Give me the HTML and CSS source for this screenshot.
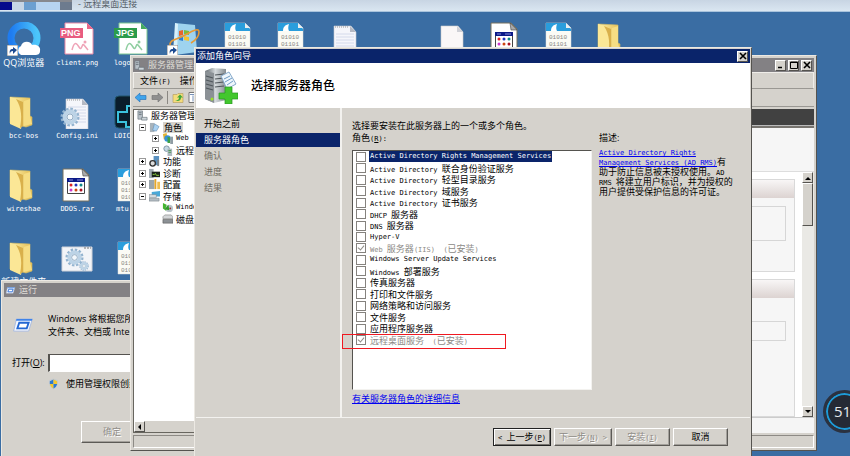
FILE: index.html
```html
<!DOCTYPE html>
<html lang="zh-CN">
<head>
  <meta charset="UTF-8" />
  <meta name="viewport" content="width=device-width, initial-scale=1.0" />
  <title>远程桌面连接</title>
  <link rel="stylesheet" href="styles.css">
</head>
<body>
  <svg class="defs" aria-hidden="true">
    <defs>
      <linearGradient id="gFolder" x1="0" x2="1"><stop offset="0" stop-color="#fdf0a8"/><stop offset="1" stop-color="#e3bd55"/></linearGradient>
      <linearGradient id="gBlue" x1="0" x2="1"><stop offset="0" stop-color="#1e7bf0"/><stop offset="1" stop-color="#4cc6fb"/></linearGradient>
      <linearGradient id="gServer" x1="0" x2="1"><stop offset="0" stop-color="#60676c"/><stop offset=".5" stop-color="#d5dadd"/><stop offset="1" stop-color="#858c91"/></linearGradient>
      <symbol id="shortcut" viewBox="0 0 11 11"><path d="M0 0h11v11H0z" fill="#fff" stroke="#888"/><path d="M3 9c-1-3 0-5 3-5V2l4 3-4 4V6C4 6 3 7 3 9z" fill="#1c4b91"/></symbol>
      <symbol id="folder" viewBox="0 0 34 34">
        <path d="M3 2l20 1v18l2 1v8l-6 2L3 28z" fill="url(#gFolder)" stroke="#d9bd62" stroke-width=".6"/>
        <path d="M3 2l11 4c2 6 2 20 0 28L3 29z" fill="#fbe796"/>
        <path d="M9 4l7 3v24l-3 2c2-10 2-20-4-29z" fill="#d9b04b"/>
        <path d="M17 6l6-2v17l2 8-8 2z" fill="#f6dd83"/>
      </symbol>
      <symbol id="binfile" viewBox="0 0 34 34">
        <path d="M4 1h20l5 5v27H4z" fill="#fbfbf5" stroke="#ddd" stroke-width=".5"/>
        <path d="M4 1h20l5 6v2H4z" fill="#2a9ddc"/>
        <path d="M9 9c0-4 2-6 6-7-1 3-1 5 0 7z" fill="#fff"/>
        <path d="M24 1v5h5z" fill="#e9eef0"/>
        <g fill="#878781" font-family="Liberation Mono" font-size="6"><text x="7" y="17">01010</text><text x="7" y="24">01101</text><text x="7" y="31">01010</text></g>
      </symbol>
      <symbol id="notes" viewBox="0 0 34 34">
        <path d="M6 4h17l5 6v24H6z" fill="#f5f6fb" stroke="#c8cbd2" stroke-width=".6"/>
        <path d="M7 5h14" stroke="#999" stroke-dasharray="1 1"/><path d="M22 4v6h6z" fill="#b5b9c3"/>
        <path d="M8 12h18M8 15h18M8 18h18M8 21h18M8 24h18M8 27h18" stroke="#cbd4e8" stroke-width=".8"/>
      </symbol>
      <symbol id="rar" viewBox="0 0 34 34">
        <path d="M3 1h20l6 6v26H3z" fill="#fff" stroke="#77705c"/><path d="M22 1l1 7h6z" fill="#aaa" stroke="#444" stroke-width=".6"/>
        <path d="M7.500 11.500h17v14h-17z" fill="#fff" stroke="#444"/><path d="M7 10h18v4H7z" fill="#0b1987"/>
        <path d="M9 12h4m4 0h6" stroke="#8b92da"/>
        <g><circle cx="11" cy="17" r="1.500" fill="#d22"/><circle cx="16" cy="17" r="1.500" fill="#23b"/><circle cx="21" cy="17" r="1.500" fill="#188"/><circle cx="11" cy="22" r="1.500" fill="#c3c"/><circle cx="16" cy="22" r="1.500" fill="#c41"/><circle cx="21" cy="22" r="1.500" fill="#a12"/></g>
      </symbol>
      <symbol id="gear" viewBox="0 0 20 20">
        <circle cx="10" cy="10" r="8" fill="none" stroke="#93b3cf" stroke-width="3" stroke-dasharray="2.500 1.690"/>
        <circle cx="10" cy="10" r="5.500" fill="none" stroke="#bcd3e6" stroke-width="4"/><circle cx="10" cy="10" r="3" fill="#f2f7fb" stroke="#7f9db8" stroke-width=".8"/>
      </symbol>
      <symbol id="server" viewBox="0 0 12 12">
        <path d="M1 1h5v9H1z" fill="#b8c1c8" stroke="#6b747b" stroke-width=".7"/><path d="M2 3h3M2 5h3" stroke="#56606a" stroke-width=".8"/>
        <path d="M5 8h6v3H5z" fill="#cdd5da" stroke="#68727a" stroke-width=".7"/>
      </symbol>
      <symbol id="runicon" viewBox="0 0 22 16"><path d="M4 1h17l-4 13H1z" fill="#f4f8ff" stroke="#a6b9dd"/><path d="M4 1h17l-.6 2H3.500z" fill="#3f83e8"/><path d="M7 5h10l-2 6H5z" fill="#fff" stroke="#2367d3" stroke-width="2"/></symbol>
      <symbol id="cross" viewBox="0 0 8 8"><path d="M1 1l6 6M7 1L1 7" stroke="#000" stroke-width="1.600"/></symbol>
    </defs>
  </svg>

  <header class="session-bar">
    <span class="mosaic"><i></i><i></i><i></i><i></i><i></i><i></i></span>
    <span class="session-title">- 远程桌面连接</span>
  </header>

  <main class="desktop">
    <div class="icon-row">
      <a class="shortcut" href="#"><svg viewBox="0 0 34 34"><circle cx="17" cy="16" r="13" fill="none" stroke="url(#gBlue)" stroke-width="7"/><path d="M14 33a5 5 0 0 1 0-9c1-5 9-6 11-1 5-1 9 2 8 6 0 3-2 4-5 4z" fill="#fff"/><use href="#shortcut" y="23" width="11" height="11"/></svg><span>QQ浏览器</span></a>
      <a class="shortcut" href="#"><svg viewBox="0 0 34 34"><path d="M5 1h22l6 6v25H5z" fill="#fff" stroke="#ee8ba6"/><path d="M27 1v6h6z" fill="#e8678a"/><path d="M0 6h23v10H0z" fill="#e85c80"/><text x="1" y="14" font-family="Liberation Sans" font-weight="bold" font-size="9" fill="#fff">PNG</text><path d="M12 28c2-8 4-8 7-3s3-5 5-2l4 5" fill="none" stroke="#efa3b7" stroke-width="1.500"/><circle cx="25" cy="20" r="1.500" fill="#efa3b7"/></svg><span class="en">client.png</span></a>
      <a class="shortcut" href="#"><svg viewBox="0 0 34 34"><path d="M5 1h22l6 6v25H5z" fill="#fff" stroke="#7fc893"/><path d="M27 1v6h6z" fill="#45aa61"/><path d="M0 6h23v10H0z" fill="#2c9c4b"/><text x="2" y="14" font-family="Liberation Sans" font-weight="bold" font-size="9" fill="#fff">JPG</text><path d="M12 28c2-8 4-8 7-3s3-5 5-2l4 5" fill="none" stroke="#8fcea0" stroke-width="1.500"/><circle cx="25" cy="20" r="1.500" fill="#8fcea0"/></svg><span class="en">logo.jpg</span></a>
      <a class="shortcut" href="#"><svg viewBox="0 0 34 34"><path d="M8 1l20 2 2 27-22 3z" fill="#9ed3ef"/><path d="M8 1l3 1-1 31-4-1z" fill="#d7f0fb"/><path d="M12 9l4-1v5l-4 1z" fill="#e9632d"/><path d="M17 8l5 1v4l-5-1z" fill="#7cbb3c"/><path d="M12 15l4-1v5l-4-1z" fill="#2d7fd4"/><path d="M17 14l5 1v4l-5-1z" fill="#f2c233"/><path d="M3 24C2 17 10 18 20 12c7-4 12-6 12-2s-3 8-8 11" fill="none" stroke="#e89a35" stroke-width="1.600"/><use href="#shortcut" y="23" width="11" height="11"/></svg></a>
      <a class="shortcut" href="#"><svg><use href="#binfile"/></svg></a>
      <a class="shortcut" href="#"><svg><use href="#binfile"/></svg></a>
      <a class="shortcut" href="#"><svg><use href="#notes"/></svg></a>
      <span></span>
      <a class="shortcut" href="#"><svg viewBox="0 0 34 34"><path d="M6 4h17l5 6v24H6z" fill="#faf7f7" stroke="#ccc" stroke-width=".6"/><path d="M22 4v6h6z" fill="#cfd0d6"/></svg></a>
      <a class="shortcut" href="#"><svg><use href="#rar"/></svg></a>
      <a class="shortcut" href="#"><svg><use href="#binfile"/></svg></a>
      <a class="shortcut" href="#"><svg><use href="#folder"/></svg></a>
    </div>
    <div class="icon-row">
      <a class="shortcut" href="#"><svg><use href="#folder"/></svg><span class="en">bcc-bos</span></a>
      <a class="shortcut" href="#"><svg viewBox="0 0 34 34"><use href="#notes"/><use href="#gear" x="0" y="12" width="20" height="20"/></svg><span class="en">Config.ini</span></a>
      <a class="shortcut" href="#"><svg viewBox="0 0 34 34"><rect x="1" y="1" width="32" height="32" rx="4" fill="#0a1d2b" stroke="#205468"/><path d="M17 3v8h-4v6H4v10h8v5h6" fill="none" stroke="#3bc2dd" stroke-width="2"/></svg><span class="en">LOIC.exe</span></a>
    </div>
    <div class="icon-row">
      <a class="shortcut" href="#"><svg><use href="#folder"/></svg><span class="en">wireshae</span></a>
      <a class="shortcut" href="#"><svg><use href="#rar"/></svg><span class="en">DDOS.rar</span></a>
      <a class="shortcut" href="#"><svg><use href="#binfile"/></svg><span class="en">mtu.bin</span></a>
    </div>
    <div class="icon-row">
      <a class="shortcut" href="#"><svg><use href="#folder"/></svg><span>新建文件夹</span></a>
      <a class="shortcut" href="#"><svg viewBox="0 0 34 34"><path d="M2 6h30v24H2z" fill="#f2f4f8" stroke="#cfd3da"/><path d="M24 7h7" stroke="#777" stroke-dasharray="2 1"/><use href="#gear" x="5" y="7" width="19" height="19"/><use href="#gear" x="19" y="20" width="10" height="10"/></svg></a>
      <a class="shortcut" href="#"><svg><use href="#binfile"/></svg></a>
    </div>
  </main>

  <!-- 运行 -->
  <section class="window run-dialog">
    <div class="titlebar inactive"><svg class="run-small"><use href="#runicon"/></svg>运行</div>
    <div class="run-body">
      <svg class="run-icon"><use href="#runicon"/></svg>
      <p>Windows 将根据您所输入的名称，<br>文件夹、文档或 Internet 资源。</p>
      <label for="open">打开(<u>O</u>):</label>
      <input type="text" id="open">
      <div class="run-admin"><svg viewBox="0 0 12 12"><path d="M6 0l5 2c0 5-1 8-5 10C2 10 1 7 1 2z" fill="#c4cbd2"/><path d="M6 1v5H2V3z" fill="#2b79d0"/><path d="M6 1v5h4V3z" fill="#f5c92f"/><path d="M6 6v5C4 10 3 9 2 6z" fill="#f5c92f"/><path d="M6 6v5c2-1 3-2 4-5z" fill="#2b79d0"/></svg>使用管理权限创建此任务。</div>
    </div>
    <button class="btn run-ok" disabled>确定</button>
  </section>

  <!-- 服务器管理器 -->
  <section class="window manager">
    <div class="titlebar inactive">
      <svg><use href="#server"/></svg>服务器管理器
      <div class="controls">
        <button class="ctl" aria-label="最小化"><svg viewBox="0 0 8 8"><path d="M1 6.500h4" stroke="#000" stroke-width="1.500"/></svg></button>
        <button class="ctl" aria-label="最大化"><svg viewBox="0 0 8 8"><path d="M.5 1h7v6.500h-7zM.5 1.500h7" fill="none" stroke="#000"/></svg></button>
        <button class="ctl" aria-label="关闭"><svg><use href="#cross"/></svg></button>
      </div>
    </div>
    <nav class="menubar"><a>文件<span class="en">(F)</span></a><a>操作<span class="en">(A)</span></a></nav>
    <div class="toolbar">
      <svg viewBox="0 0 12 10"><path d="M0 5l5-4.500V3h6v4H5v2.500z" fill="#3fa4ec" stroke="#246bb3" stroke-width=".6"/></svg>
      <svg viewBox="0 0 12 10"><path d="M12 5L7 .5V3H1v4h6v2.500z" fill="#8f8f8f" stroke="#717171" stroke-width=".6"/></svg>
      <i class="sep"></i>
      <svg viewBox="0 0 12 10"><path d="M1 2h4l1-1h5v9H1z" fill="#f4dc7b" stroke="#b0975a" stroke-width=".6"/><path d="M3 8c3 0 4-1 4-3H5l3-3 3 3H9c0 3-2 4-6 3z" fill="#42a83a"/></svg>
      <svg viewBox="0 0 12 10"><path d="M1 0h10v10H1z" fill="#fff" stroke="#777"/><path d="M2 2h8M5 3v6" stroke="#7691b8"/></svg>
    </div>
    <div class="panes">
      <div class="tree-pane">
        <ul class="tree">
          <li><svg><use href="#server"/></svg>服务器管理器</li>
          <li class="l1"><i class="exp"></i><svg viewBox="0 0 12 12"><path d="M1 1h5v10H1z" fill="#a8b3bb"/><path d="M6 2l5 3-3 5-4-1z" fill="#a9d1f2" stroke="#5d87ac" stroke-width=".6"/></svg><b>角色</b></li>
          <li class="l2"><i class="exp plus"></i><svg viewBox="0 0 12 12"><path d="M1 1l4-1 1 6-4 1z" fill="#e3b435"/><circle cx="6" cy="6" r="3.500" fill="#3592d8"/><path d="M6 4l3 1v6H6z" fill="#3ca046"/><path d="M9 4h3v8H9z" fill="#919da5"/></svg><span class="en">Web</span></li>
          <li class="l2"><i class="exp plus"></i><svg viewBox="0 0 12 12"><circle cx="5" cy="4" r="3" fill="#c5d9e4" stroke="#7b919f"/><path d="M6 4h5v8H6z" fill="#adb8bf"/><path d="M7 6h3M7 8h3" stroke="#4b9a55"/></svg>远程桌面服务</li>
          <li class="l1"><i class="exp plus"></i><svg viewBox="0 0 12 12"><path d="M5 0h6v10H5z" fill="#5a91c0"/><circle cx="4" cy="8" r="3" fill="#ddd" stroke="#333" stroke-width="1.500"/><path d="M9 4h2v7H9z" fill="#7b848a"/></svg>功能</li>
          <li class="l1"><i class="exp plus"></i><svg viewBox="0 0 12 12"><path d="M0 1h5v10H0z" fill="#a3adb4"/><path d="M3 4h9v6H3z" fill="#1c251c"/><path d="M4 7h2l1-1 1 2h3" fill="none" stroke="#8ed33c"/></svg>诊断</li>
          <li class="l1"><i class="exp plus"></i><svg viewBox="0 0 12 12"><path d="M0 1h6v10H0z" fill="#9ba6ae"/><path d="M6 0h2v11H6z" fill="#e8a728"/><path d="M9 3h3v8H9z" fill="#efbd50"/></svg>配置</li>
          <li class="l1"><i class="exp"></i><svg viewBox="0 0 12 12"><path d="M3 1l9-1v6H3z" fill="#4aa8d7"/><path d="M0 4h8v3H0z" fill="#dde2e5" stroke="#77828a" stroke-width=".6"/><path d="M0 8h11v3H0z" fill="#b3bcc2" stroke="#77828a" stroke-width=".6"/></svg>存储</li>
          <li class="l2"><svg class="leaf" viewBox="0 0 12 12"><path d="M1 1l4 2v7L1 7z" fill="#45b52f"/><circle cx="8" cy="7" r="4" fill="#b9c4ca"/><path d="M3 8l4-5 1 6z" fill="#309a29"/><circle cx="9" cy="7" r="1" fill="#933"/></svg><span class="en">Windows Server</span></li>
          <li class="l2"><svg class="leaf" viewBox="0 0 12 12"><path d="M1 3l2-2h7l2 2v2H1z" fill="#d4d6d8" stroke="#777" stroke-width=".6"/><path d="M1 6h11v4H1z" fill="#8c9195" stroke="#555" stroke-width=".6"/></svg>磁盘管理</li>
        </ul>
        <div class="hscroll"><button class="ctl" aria-label="向左"><svg viewBox="0 0 8 8"><path d="M5 1v6L2 4z"/></svg></button></div>
      </div>
      <div class="detail-pane">
        <div class="dark-bar"></div>
        <div class="summary"></div>
        <div class="scroll-area">
          <div class="cards">
            <div class="card"><div class="card-head"></div><div class="card-box"></div></div>
            <div class="card"><div class="card-head"></div><div class="card-box small"></div></div>
          </div>
          <div class="vscroll">
            <button class="ctl" aria-label="向上"><svg viewBox="0 0 8 8"><path d="M1 6h6L4 3z"/></svg></button>
            <i class="thumb"></i>
            <button class="ctl" aria-label="向下"><svg viewBox="0 0 8 8"><path d="M1 2h6L4 5z"/></svg></button>
          </div>
        </div>
        <div class="detail-foot"></div>
      </div>
    </div>
    <div class="statusbar"></div>
  </section>

  <!-- 添加角色向导 -->
  <section class="window wizard">
    <div class="titlebar">添加角色向导
      <div class="controls"><button class="ctl" aria-label="关闭"><svg><use href="#cross"/></svg></button></div>
    </div>
    <div class="wizard-head">
      <svg viewBox="0 0 34 36"><path d="M1 3l7-3 14 1v31l-12 3-9-4z" fill="url(#gServer)"/><path d="M1 3l9 2v30l-9-4z" fill="#8b9196"/><path d="M11 7l9-1M11 11l9-1M11 15l9-1M11 19l9-1M2 8l7 2M2 12l7 2M2 16l7 2M2 20l7 2" stroke="#4f565b" stroke-width="1.200"/><circle cx="8" cy="31" r="1.500" fill="#9be12c"/><path d="M17 8l8-4 7 12-9 5z" fill="#eef6fc" stroke="#87aacb"/><path d="M20 11l6-3M21 14l7-4M23 17l6-4" stroke="#6d9ac5"/><path d="M21 19h7v6h6v6h-6v5h-7v-5h-6v-6h6z" fill="#43c72e" stroke="#299722" stroke-width=".7"/></svg>
      <h1>选择服务器角色</h1>
    </div>
    <div class="wizard-body">
      <nav class="steps">
        <a class="done">开始之前</a>
        <a class="current">服务器角色</a>
        <a>确认</a>
        <a>进度</a>
        <a>结果</a>
      </nav>
      <div class="wizard-main">
        <div class="role-page">
          <div class="role-col">
            <p>选择要安装在此服务器上的一个或多个角色。</p>
            <p>角色<span class="en">(<u>R</u>):</span></p>
            <div class="role-box">
              <div class="roles">
                <label class="selected"><input type="checkbox"><span class="en">Active Directory Rights Management Services</span></label>
                <label><input type="checkbox"><span><span class="en">Active Directory </span>联合身份验证服务</span></label>
                <label><input type="checkbox"><span><span class="en">Active Directory </span>轻型目录服务</span></label>
                <label><input type="checkbox"><span><span class="en">Active Directory </span>域服务</span></label>
                <label><input type="checkbox"><span><span class="en">Active Directory </span>证书服务</span></label>
                <label><input type="checkbox"><span><span class="en">DHCP </span>服务器</span></label>
                <label><input type="checkbox"><span><span class="en">DNS </span>服务器</span></label>
                <label><input type="checkbox"><span class="en">Hyper-V</span></label>
                <label class="installed"><input type="checkbox" checked disabled><span><span class="en">Web </span>服务器<span class="en">(IIS)&nbsp; (</span>已安装<span class="en">)</span></span></label>
                <label><input type="checkbox"><span class="en">Windows Server Update Services</span></label>
                <label><input type="checkbox"><span><span class="en">Windows </span>部署服务</span></label>
                <label><input type="checkbox"><span>传真服务器</span></label>
                <label><input type="checkbox"><span>打印和文件服务</span></label>
                <label><input type="checkbox"><span>网络策略和访问服务</span></label>
                <label><input type="checkbox"><span>文件服务</span></label>
                <label><input type="checkbox"><span>应用程序服务器</span></label>
                <label class="installed"><input type="checkbox" checked disabled><span>远程桌面服务<span class="en">&nbsp; (</span>已安装<span class="en">)</span></span></label>
              </div>
              <div class="mark"></div>
            </div>
            <a class="more" href="#">有关服务器角色的详细信息</a>
          </div>
          <div class="desc">
            <h2>描述:</h2>
            <p><a class="en" href="#">Active Directory Rights<br>Management Services (AD RMS)</a>有<br>助于防止信息被未授权使用。<span class="en">AD<br>RMS </span>将建立用户标识，并为授权的<br>用户提供受保护信息的许可证。</p>
          </div>
        </div>
      </div>
    </div>
    <footer class="wizard-foot">
      <button class="btn default"><span class="en">&lt; </span>上一步<span class="en">(<u>P</u>)</span></button>
      <button class="btn" disabled>下一步<span class="en">(<u>N</u>) &gt;</span></button>
      <button class="btn gap" disabled>安装<span class="en">(<u>I</u>)</span></button>
      <button class="btn">取消</button>
    </footer>
  </section>

  <div class="ball">51</div>
</body>
</html>
```
FILE: styles.css
```css
* { box-sizing: border-box; }
html, body { height: 100%; }
body {
  margin: 0;
  overflow: hidden;
  position: relative;
  display: flex;
  flex-direction: column;
  background: #3a6da3;
  color: #000;
  font: 9px/12px "Open Sans", "Noto Sans CJK SC", sans-serif;
  white-space: nowrap;
}
p, h1, h2, ul { margin: 0; padding: 0; }
svg { display: block; flex: none; }
a { color: inherit; text-decoration: none; }
button, input { font: inherit; color: inherit; margin: 0; padding: 0; }
.defs { position: absolute; width: 0; height: 0; }
.en {
  font-family: "DejaVu Sans Mono", "Noto Sans CJK SC", monospace;
  font-size: 7px;
}
p .en, span .en { line-height: 1; }

/* top bar */
.session-bar {
  flex: none;
  height: 12px;
  display: flex;
  gap: 6px;
  overflow: hidden;
  background: linear-gradient(#c8d5e3, #dae6f1);
  border-bottom: 1px solid #a9c3dc;
  color: #555e68;
}
.mosaic {
  display: flex;
  width: 72px;
  height: 10px;
  border-top: 2px solid #86888e;
}
.mosaic i { flex: 1; background: #b6d3f0; }
.mosaic i:nth-child(1) { background: #050a8c; }
.mosaic i:nth-child(2) { background: #c7d6e6; }
.mosaic i:nth-child(3) { background: #6c9fd0; }
.mosaic i:nth-child(6) { background: #6d7b8e; }
.session-title { line-height: 8px; }

/* desktop icons */
.desktop { flex: 1; padding-top: 10px; margin: 0 -3px; }
.icon-row {
  display: grid;
  grid-template-columns: repeat(16, 1fr);
  height: 73px;
}
.shortcut {
  display: flex;
  flex-direction: column;
  align-items: center;
  color: #fff;
}
.shortcut svg { width: 34px; height: 34px; }
.shortcut span { line-height: 14px; }

/* windows */
.window {
  position: absolute;
  display: flex;
  flex-direction: column;
  padding: 2px;
  background: #d5d2cc;
  border: 1px solid;
  border-color: #ece9e3 #55534f #55534f #ece9e3;
}
.titlebar {
  flex: none;
  display: flex;
  align-items: center;
  gap: 3px;
  height: 14px;
  padding: 0 2px 0 1px;
  background: #0a246a;
  color: #fff;
}
.titlebar.inactive { background: #838184; color: #dedbd5; }
.titlebar svg { width: 11px; height: 11px; }
.controls { display: flex; gap: 2px; margin-left: auto; }
.ctl, .thumb {
  flex: none;
  display: flex;
  align-items: center;
  justify-content: center;
  width: 11px;
  height: 11px;
  background: #d5d2cc;
  border: 1px solid;
  border-color: #fff #55534f #55534f #fff;
}
.ctl svg, .titlebar .ctl svg { width: 8px; height: 8px; }
.btn {
  height: 18px;
  background: #d5d2cc;
  border: 1px solid;
  border-color: #fff #5c5a56 #5c5a56 #fff;
  box-shadow: inset -1px -1px #a3a09b;
}
.btn.default { border-color: #222; box-shadow: inset 1px 1px #fff, inset -1px -1px #77746f; }
.btn:disabled { color: #8f8c87; text-shadow: 1px 1px #fff; }

/* run */
.run-dialog { left: 1px; top: 280px; width: 230px; height: 190px; }
.run-small.run-small { height: 7px; }
.run-body {
  display: grid;
  grid-template-columns: 36px 1fr;
  align-items: center;
  padding: 15px 20px 0 8px;
}
.run-icon { width: 22px; height: 15px; }
.run-body p { line-height: 13px; }
.run-body label { margin-top: 16px; }
.run-body input {
  height: 18px;
  margin-top: 16px;
  background: #fff;
  border: 1px solid #fff;
  border-color: #55534f #fff #fff #55534f;
  border-left-width: 2px;
}
.run-admin { grid-column: 2; display: flex; gap: 7px; margin-top: 6px; }
.run-admin svg { width: 11px; height: 12px; }
.run-ok { width: 62px; height: 22px; margin: 31px 0 0 77px; }

/* server manager */
.manager { left: 130px; top: 55px; right: 33px; height: 396px; }
.menubar {
  flex: none;
  display: flex;
  gap: 9px;
  height: 17px;
  padding: 0 6px;
  line-height: 15px;
  border: 1px solid #efede9;
  border-bottom-color: #9a9893;
}
.toolbar {
  flex: none;
  display: flex;
  align-items: center;
  gap: 4px;
  height: 18px;
  padding-left: 2px;
  border-bottom: 1px solid #9a9893;
}
.toolbar svg { width: 12px; height: 11px; }
.sep { width: 1px; height: 13px; background: #8b8883; }
.panes { flex: 1; display: flex; gap: 3px; padding: 2px 0; }
.tree-pane {
  width: 190px;
  display: flex;
  flex-direction: column;
  background: #fff;
  border: 1px solid #68665f;
}
.tree {
  flex: none;
  display: grid;
  grid-template-rows: repeat(10, minmax(0, 1fr));
  height: 115px;
  padding-left: 3px;
}
.tree li { display: flex; align-items: center; gap: 3px; line-height: 11px; }
.tree svg { width: 11px; height: 11px; }
.tree b { font-weight: normal; background: #d5d2cc; padding: 0 1px; }
.l1 { padding-left: 2px; }
.l2 { padding-left: 15px; }
.leaf { margin-left: 10px; }
.exp {
  width: 7px;
  height: 7px;
  border: 1px solid #999;
  background: linear-gradient(#000, #000) center / 3px 1px no-repeat;
}
.exp.plus {
  background: linear-gradient(#000, #000) center / 3px 1px no-repeat, linear-gradient(#000, #000) center / 1px 3px no-repeat;
}
.hscroll { display: flex; margin-top: auto; background: #d5d2cc; }
.detail-pane { flex: 1; display: flex; flex-direction: column; }
.dark-bar { height: 17px; background: #414141; border-bottom: 1px solid #bbb; }
.summary { height: 46px; background: #f6f6f6; border-top: 2px solid #77746f; border-bottom: 1px solid #ddd; }
.scroll-area { flex: 1; display: flex; background: #fff; }
.cards { flex: 1; display: flex; flex-direction: column; gap: 7px; padding: 7px 7px 0 8px; }
.card { height: 93px; background: #f6f6f6; border: 1px solid #d9d9d9; }
.card:last-child { flex: 1; }
.card-head { height: 18px; background: linear-gradient(#f8f6f6, #dcd3d1); }
.card-box { height: 35px; margin: 8px; border: 1px solid #d6d6d6; }
.card-box.small { height: 20px; margin-top: 23px; }
.vscroll { width: 12px; display: flex; flex-direction: column; background: #eae9e5; }
.thumb { height: 43px; }
.vscroll .ctl:last-child { margin-top: auto; }
.detail-foot { height: 16px; background: #f5f5f5; border-top: 1px solid #ccc; }
.statusbar { height: 13px; border: 1px solid; border-color: #8d8a85 #fff #fff #8d8a85; }

/* wizard */
.wizard { left: 194px; top: 47px; right: 98px; height: 420px; padding: 1px; }
.wizard-head {
  flex: none;
  display: flex;
  align-items: center;
  gap: 13px;
  height: 45px;
  padding-left: 8px;
  background: #fff;
}
.wizard-head svg { width: 34px; height: 36px; }
.wizard-head h1 { font-size: 12px; font-weight: 500; }
.wizard-body { flex: none; display: flex; height: 310px; border-bottom: 1px solid #f3f2ef; }
.steps {
  flex: none;
  width: 146px;
  display: flex;
  flex-direction: column;
  gap: 2px;
  padding-top: 9px;
  border-right: 2px solid #f3f2ef;
}
.steps a { padding-left: 8px; line-height: 14px; color: #6f6c62; }
.steps .done { color: #000; }
.steps .current { background: #0a246a; color: #fff; }
.wizard-main { flex: 1; min-width: 0; }
.role-page { display: flex; gap: 7px; padding: 12px 12px 0 10px; }
.role-col { flex: 0 0 240px; }
.role-box {
  position: relative;
  height: 240px;
  margin: 6px 0 3px;
  background: #fff;
  border: 1px solid;
  border-color: #55534f #f3f2ef #f3f2ef #55534f;
}
.roles {
  display: grid;
  grid-template-rows: repeat(17, minmax(0, 1fr));
  height: 195px;
  padding-left: 3px;
}
.roles label { display: flex; align-items: center; gap: 3px; line-height: 11px; }
.roles label > span { padding: 0 1px; }
.roles input {
  appearance: none;
  flex: none;
  width: 10px;
  height: 10px;
  background: #fff;
  border: 1px solid #85827e;
}
.roles input:checked::after {
  content: "";
  display: block;
  width: 3px;
  height: 5px;
  margin: 0 auto;
  border: solid #8f8c87;
  border-width: 0 1px 1px 0;
  transform: rotate(40deg);
}
.roles .selected > span { background: #0a246a; color: #fff; }
.roles .installed { color: #8c8a86; }
.mark {
  position: absolute;
  left: -11px;
  top: 183px;
  width: 164px;
  height: 15px;
  border: 1px solid #f01820;
}
.more, .desc a { color: #0000f0; text-decoration: underline; }
.desc { padding-top: 12px; }
.desc h2 { font-size: 9px; font-weight: normal; }
.desc p { line-height: 10px; margin-top: 3px; }
.wizard-foot { display: flex; gap: 3px; justify-content: flex-end; padding: 10px 22px 0; }
.wizard-foot .btn { width: 58px; }
.wizard-foot .btn.gap, .wizard-foot .gap + .btn { width: 55px; }

/* floating meter */
.ball {
  position: absolute;
  right: -16px;
  top: 390px;
  width: 43px;
  height: 43px;
  padding-left: 8px;
  border: 3px solid #2b3240;
  border-radius: 50%;
  background: #252a35;
  box-shadow: inset 0 0 0 2px #1d9bd8;
  color: #e6e8ec;
  font-size: 15px;
  line-height: 37px;
}
```
